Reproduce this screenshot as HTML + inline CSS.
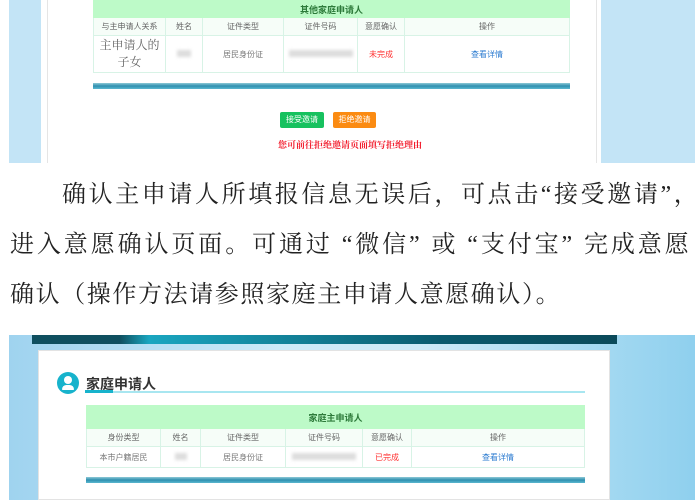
<!DOCTYPE html><html><head><meta charset="utf-8"><style>
*{margin:0;padding:0;box-sizing:border-box}
body{width:700px;height:500px;background:#fff;position:relative;overflow:hidden;font-family:"Liberation Sans","Noto Sans CJK SC",sans-serif}
.abs{position:absolute}
table{border-collapse:collapse;position:absolute;table-layout:fixed}
td{border:1px solid #d8f3e6;text-align:center;font-size:8px;color:#777;background:#fff}
.h td{background:#bdfac8;color:#2d7a3a;font-weight:bold;font-size:9px;border-color:#bdfac8}
.s td{background:#f6fdf8;color:#666}
.red{color:#f33!important}.blue{color:#2b7bd0!important}
.blur{display:inline-block;height:7px;background:#ddd;filter:blur(1.5px)}
.bar{position:absolute;height:6px;background:linear-gradient(#8ec9d6,#2f8fb0 50%,#5bb8d0)}
.txt{position:absolute;left:10px;font-family:"Liberation Serif","Noto Serif CJK SC",serif;font-size:24px;color:#222;letter-spacing:1.6px;line-height:50px;white-space:nowrap}
</style></head><body>
<div class="abs" style="left:9px;top:0;width:32px;height:163px;background:#c3e4f6"></div>
<div class="abs" style="left:601px;top:0;width:94px;height:163px;background:#c3e4f6"></div>
<div class="abs" style="left:47px;top:0;width:550px;height:163px;background:#fff;border-left:1px solid #e5e5e5;border-right:1px solid #e5e5e5"></div>
<table style="left:93px;top:0;width:477px">
<colgroup><col style="width:72px"><col style="width:37px"><col style="width:81px"><col style="width:74px"><col style="width:47px"><col></colgroup>
<tr class="h" style="height:17px"><td colspan="6">其他家庭申请人</td></tr>
<tr class="s" style="height:18px"><td>与主申请人关系</td><td>姓名</td><td>证件类型</td><td>证件号码</td><td>意愿确认</td><td>操作</td></tr>
<tr style="height:37px"><td style="font-family:'Liberation Serif','Noto Serif CJK SC',serif;font-size:12px;line-height:17px;color:#666">主申请人的<br>子女</td><td><span class="blur" style="width:14px"></span></td><td>居民身份证</td><td><span class="blur" style="width:64px"></span></td><td class="red">未完成</td><td class="blue">查看详情</td></tr>
</table>
<div class="bar" style="left:93px;top:83px;width:477px"></div>
<div class="abs" style="left:280px;top:112px;width:44px;height:16px;background:#17c15f;border-radius:2px;color:#fff;font-size:8px;text-align:center;line-height:16px">接受邀请</div>
<div class="abs" style="left:333px;top:112px;width:43px;height:16px;background:#fb8b12;border-radius:2px;color:#fff;font-size:8px;text-align:center;line-height:16px">拒绝邀请</div>
<div class="abs" style="left:0;width:700px;top:138px;text-align:center;color:#f21a2a;font-weight:bold;font-size:9px;font-family:'Liberation Serif','Noto Serif CJK SC',serif">您可前往拒绝邀请页面填写拒绝理由</div>

<div class="txt" style="top:170px;left:62px;letter-spacing:2.6px">确认主申请人所填报信息无误后，可点击“接受邀请”，</div>
<div class="txt" style="top:220px;letter-spacing:2.9px">进入意愿确认页面。可通过 “微信” 或 “支付宝” 完成意愿</div>
<div class="txt" style="top:270px">确认（操作方法请参照家庭主申请人意愿确认）。</div>

<div class="abs" style="left:9px;top:335px;width:686px;height:165px;background:linear-gradient(90deg,#9fd3ef,#cdeaf8 40%,#cdeaf8 60%,#8fd0ee)"></div>
<div class="abs" style="left:32px;top:335px;width:585px;height:9px;background:linear-gradient(90deg,#0f4f5f 15%,#1aa6c0 20%,#0a5a6e 70%,#0b4a5a)"></div>
<div class="abs" style="left:38px;top:350px;width:572px;height:150px;background:#fff;border:1px solid #e3e3e3"></div>
<div class="abs" style="left:57px;top:372px;width:22px;height:22px;border-radius:50%;background:#17b3cc"></div>
<div class="abs" style="left:64px;top:376px;width:8px;height:8px;border-radius:50%;background:#fff"></div>
<div class="abs" style="left:62px;top:385px;width:12px;height:5px;border-radius:6px 6px 1px 1px;background:#fff"></div>
<div class="abs" style="left:86px;top:374px;font-size:14px;font-weight:bold;color:#333">家庭申请人</div>
<div class="abs" style="left:85px;top:391px;width:500px;height:2px;background:#a8e6f0"></div>
<div class="abs" style="left:85px;top:390px;width:28px;height:3px;background:#17b3cc"></div>
<table style="left:86px;top:405px;width:499px">
<colgroup><col style="width:74px"><col style="width:40px"><col style="width:85px"><col style="width:77px"><col style="width:49px"><col></colgroup>
<tr class="h" style="height:23px"><td colspan="6">家庭主申请人</td></tr>
<tr class="s" style="height:18px"><td>身份类型</td><td>姓名</td><td>证件类型</td><td>证件号码</td><td>意愿确认</td><td>操作</td></tr>
<tr style="height:21px"><td>本市户籍居民</td><td><span class="blur" style="width:12px"></span></td><td>居民身份证</td><td><span class="blur" style="width:64px"></span></td><td class="red">已完成</td><td class="blue">查看详情</td></tr>
</table>
<div class="bar" style="left:86px;top:477px;width:499px"></div>
</body></html>
